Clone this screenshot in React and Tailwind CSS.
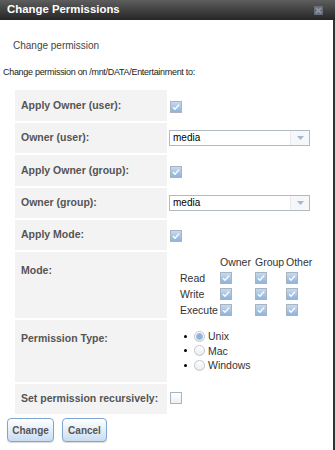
const LABEL = "font-['Liberation_Sans',Arial,sans-serif] font-bold text-[10.5px] text-[#555]";

function Check({ checked = true }) {
  return (
    <span className="inline-flex h-[12px] w-[12px] shrink-0 items-center justify-center border border-[#a9b4c2] bg-gradient-to-b from-white to-[#eef1f4]">
      {checked && (
        <span className="flex h-[10px] w-[10px] items-center justify-center bg-gradient-to-b from-[#c6daf0] to-[#8fb3d9]">
          <svg width="8" height="8" viewBox="0 0 8 8">
            <path d="M1 4.2 L3 6.2 L7 1.6" fill="none" stroke="#fff" strokeWidth="1.4" />
          </svg>
        </span>
      )}
    </span>
  );
}

function Radio({ checked }) {
  return (
    <span className="inline-flex h-[11px] w-[11px] items-center justify-center rounded-full border border-[#c0c7cf] bg-gradient-to-b from-white to-[#e9ecef]">
      {checked && <span className="h-[7px] w-[7px] rounded-full border border-[#9dbde0] bg-[#8db3dc]" />}
    </span>
  );
}

function Select({ value }) {
  return (
    <div className="ml-[2px] flex h-[16px] w-[141px] items-center border border-[#b3b9c3] bg-white">
      <span className="flex-1 pl-[3px] text-[10px] leading-none text-black">{value}</span>
      <span className="flex h-full w-[19px] items-center justify-center border-l border-[#e8eaee] bg-[#f6f7f8]">
        <svg width="7" height="4" viewBox="0 0 7 4">
          <path d="M0 0 H7 L3.5 4 Z" fill="#a7b6d3" />
        </svg>
      </span>
    </div>
  );
}

function Row({ label, h, top = false, children }) {
  return (
    <div className="flex" style={{ height: h }}>
      <div className={`flex w-[152px] bg-[#f3f3f3] pl-[6px] ${top ? 'items-start pt-[11px]' : 'items-center'}`}>
        <span className={LABEL}>{label}</span>
      </div>
      <div className={`flex flex-1 ${top ? 'items-start' : 'items-center'}`}>{children}</div>
    </div>
  );
}

export default function App() {
  const modes = ['Read', 'Write', 'Execute'];
  return (
    <div className="relative h-[450px] w-[335px] overflow-hidden bg-white font-['Liberation_Sans',Arial,sans-serif]">
      <div className="flex h-[20px] items-center justify-between bg-gradient-to-b from-[#5e5e5e] to-[#262626] pl-[7px] pr-[12px]">
        <span className="text-[11.4px] font-bold leading-none text-white">Change Permissions</span>
        <span className="flex h-[9px] w-[9px] items-center justify-center rounded-[1px] bg-[#6b6f75]">
          <svg width="7" height="7" viewBox="0 0 7 7">
            <path d="M1 1 L6 6 M6 1 L1 6" stroke="#8d9bb0" strokeWidth="1.6" />
          </svg>
        </span>
      </div>
      <div className="flex h-[430px] flex-col border-r-2 border-[#333]">
        <p className="mt-[20px] pl-[13px] text-[10px] leading-[12px] text-[#444]">Change permission</p>
        <p className="mt-[14px] pl-[3px] text-[9px] leading-[12px] tracking-[-0.3px] text-[#222]">
          Change permission on /mnt/DATA/Entertainment to:
        </p>
        <div className="ml-[15px] mt-[12px] flex flex-col gap-[2px]">
          <Row label="Apply Owner (user):" h={31}>
            <span className="ml-[3px]"><Check /></span>
          </Row>
          <Row label="Owner (user):" h={30}>
            <Select value="media" />
          </Row>
          <Row label="Apply Owner (group):" h={31}>
            <span className="ml-[3px]"><Check /></span>
          </Row>
          <Row label="Owner (group):" h={30}>
            <Select value="media" />
          </Row>
          <Row label="Apply Mode:" h={30}>
            <span className="ml-[3px]"><Check /></span>
          </Row>
          <Row label="Mode:" h={66} top>
            <div className="ml-[13px] mt-[2px] grid grid-cols-[40px_35px_31px_auto] items-center text-[10.5px] leading-[16px] text-[#333]">
              <span />
              <span>Owner</span>
              <span>Group</span>
              <span>Other</span>
              {modes.map((m) => (
                <>
                  <span key={m}>{m}</span>
                  <Check />
                  <Check />
                  <Check />
                </>
              ))}
            </div>
          </Row>
          <Row label="Permission Type:" h={62} top>
            <ul className="ml-[17px] mt-[9px] flex flex-col text-[10.5px] leading-[14.5px] text-[#333]">
              {['Unix', 'Mac', 'Windows'].map((t, i) => (
                <li key={t} className="flex items-center">
                  <span className="mr-[7px] h-[3px] w-[3px] rounded-full bg-black" />
                  <Radio checked={i === 0} />
                  <span className="ml-[3px]">{t}</span>
                </li>
              ))}
            </ul>
          </Row>
          <Row label="Set permission recursively:" h={30}>
            <span className="ml-[3px]"><Check checked={false} /></span>
          </Row>
        </div>
        <div className="mt-[4px] flex gap-[8px] pl-[7px]">
          {['Change', 'Cancel'].map((b, i) => (
            <button
              key={b}
              className={`h-[24px] ${i === 0 ? 'w-[47px]' : 'w-[45px]'} rounded-[4px] border border-[#7fa6cf] bg-gradient-to-b from-white to-[#c9dcf1] text-[10px] font-bold text-[#555] shadow-[0_1px_1px_rgba(0,0,0,0.15)]`}
            >
              {b}
            </button>
          ))}
        </div>
      </div>
    </div>
  );
}
